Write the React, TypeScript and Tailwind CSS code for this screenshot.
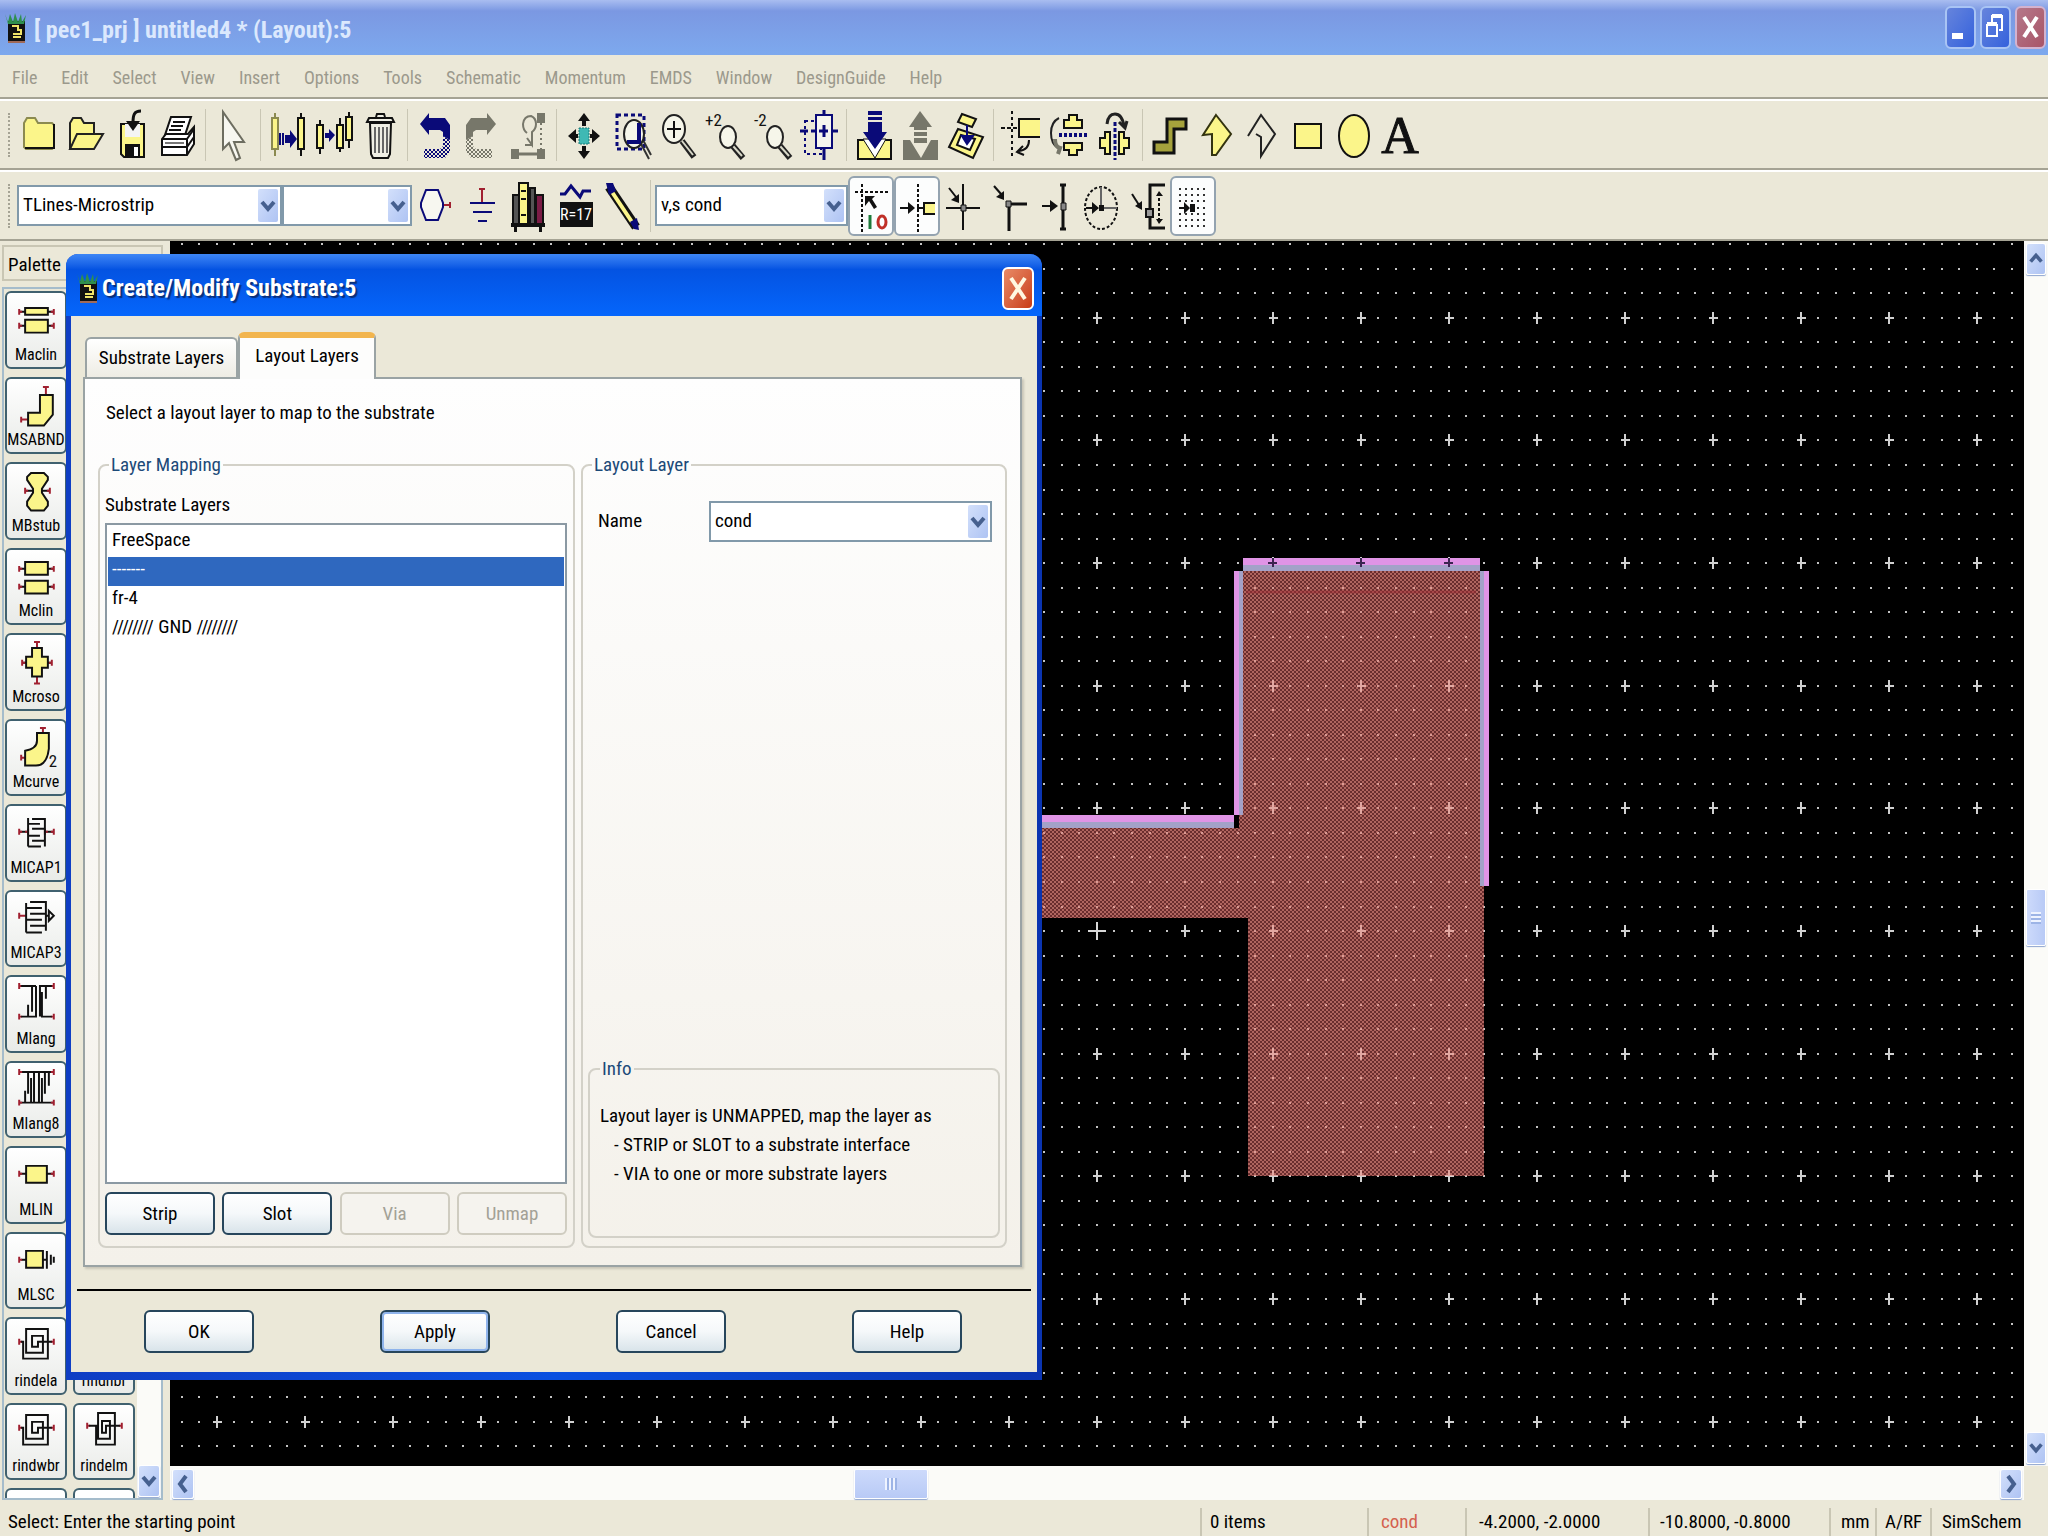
import { useId, type ReactNode } from "react";
import clsx from "clsx";

const Y = "#fbf58a";
const NAVY = "#0a0a78";
const RED = "#a02030";

const MENUS = [
  "File",
  "Edit",
  "Select",
  "View",
  "Insert",
  "Options",
  "Tools",
  "Schematic",
  "Momentum",
  "EMDS",
  "Window",
  "DesignGuide",
  "Help",
];

type Tool = { label: string; art: ReactNode; pressed?: boolean };

const lens = (cx: number, cy: number, rx: number, ry: number, hx: number, hy: number) => (
  <>
    <path d={`M${cx + rx - 3} ${cy + ry - 2}L${hx} ${hy}`} stroke="#222" strokeWidth="6" />
    <path d={`M${cx + rx - 3} ${cy + ry - 2}L${hx - 1} ${hy - 2}`} stroke="#d8d8c8" strokeWidth="2" />
    <ellipse cx={cx} cy={cy} rx={rx} ry={ry} fill="#f6f6ea" stroke="#222" strokeWidth="2" />
  </>
);

function CurvedArrow({ color, flip }: { color: string; flip?: boolean }) {
  const dither = useId();
  return (
    <g transform={flip ? "matrix(-1 0 0 1 43 0)" : undefined}>
      <pattern id={dither} width="4" height="4" patternUnits="userSpaceOnUse">
        <path d="M0 0h2v2H0zM2 2h2v2H2z" fill={color} />
      </pattern>
      <path d="M7 15L16 4v5h16l5 7v15l-7-4v-4l-3-2H16v5z" fill={color} />
      <path d="M30 27l7 4v12l-5 6H11v-9h16l3-3z" fill={`url(#${dither})`} />
    </g>
  );
}

const FILE_TOOLS: Tool[] = [
  {
    label: "New",
    art: (
      <>
        <path d="M6 14l3-5h8l3 5h14l2 2v22l-2 2H8l-2-2z" fill={Y} stroke="#8b8a50" strokeWidth="2" />
        <path d="M36 15v24H7" stroke="#111" strokeWidth="2" />
      </>
    ),
  },
  {
    label: "Open",
    art: (
      <g fill={Y} stroke="#222" strokeWidth="2">
        <path d="M6 40V14l3-5h8l3 5h10v11" />
        <path d="M13 25h26L30 40H6z" />
      </g>
    ),
  },
  {
    label: "Save",
    art: (
      <>
        <path d="M11 15h23v33H14l-3-3z" fill={Y} stroke="#111" strokeWidth="2" />
        <path d="M15 15h15v13H15z" fill="#f4f4f4" />
        <path d="M15 35h15v13H15z" fill="#111" />
        <path d="M24 38h4v9h-4z" fill="#fff" />
        <path d="M31 2c-7 0-8 4-8 12" stroke="#111" strokeWidth="3" />
        <path d="M16 12h14l-7 10z" fill="#111" />
      </>
    ),
  },
  {
    label: "Print",
    art: (
      <g stroke="#111" strokeWidth="2" fill="#fff">
        <path d="M15 8h20l-6 18H9z" />
        <path d="M17 13h12M15 17h12M13 21h12" />
        <path d="M6 30l4-5h22l6-7v17l-7 11H6z" />
        <path d="M6 30h25v16M31 30l7-10M6 38h25l7-10" />
        <path d="M9 34h19" stroke="#777" />
      </g>
    ),
  },
];

const POINTER_TOOLS: Tool[] = [
  {
    label: "End command",
    art: <path d="M12 3v37l6-6 7 17 4-2-6-16h10z" fill="#f7f7f0" stroke="#6d6d60" strokeWidth="2" />,
  },
];

const EDIT_TOOLS: Tool[] = [
  {
    label: "Move component",
    art: (
      <g strokeWidth="2">
        <path d="M9 4v43" stroke="#8b8a50" />
        <path d="M6 9h6v31H6z" fill={Y} stroke="#8b8a50" />
        <path d="M35 4v43" stroke="#111" />
        <path d="M32 9h6v31h-6z" fill={Y} stroke="#111" />
        <path d="M14 24v12M17 24v12" stroke={NAVY} />
        <path d="M19 26h5v-5l7 9-7 9v-5h-5z" fill={NAVY} />
      </g>
    ),
  },
  {
    label: "Copy component",
    art: (
      <g strokeWidth="2" stroke="#111" fill={Y}>
        <path d="M8 11v34M28 9v34M37 3v36" />
        <path d="M5 16h6v23H5zM25 16h6v23h-6zM34 8h6v23h-6z" />
        <path d="M13 24h4v-4l6 6-6 7v-4h-4z" fill={NAVY} stroke="none" />
      </g>
    ),
  },
  {
    label: "Delete",
    art: (
      <g stroke="#111" strokeWidth="2" fill="#efeee4">
        <path d="M12 14h21l-1 31-2 4H15l-2-4z" />
        <path d="M9 13l2-4h23l2 4zM18 8l1-3h7l1 3" />
        <path d="M17 18v26M21 18v26M25 18v26M29 18v26" stroke="#666" />
      </g>
    ),
  },
];

const UNDO_TOOLS: Tool[] = [
  { label: "Undo", art: <CurvedArrow color={NAVY} /> },
  { label: "Redo", art: <CurvedArrow color="#77776a" flip /> },
  {
    label: "Edit corner",
    art: (
      <g stroke="#77776a" strokeWidth="2">
        <path d="M31 5h6v8h-6zM5 41h6v8H5zM31 41h6v8h-6z" fill="#77776a" />
        <path d="M11 45h20" strokeWidth="3" />
        <path d="M34 14v27" strokeDasharray="2 3" />
        <path d="M20 24q-4-3-4-9 1-8 8-8 5 2 5 8 0 5-4 8v12" />
        <path d="M20 29l5 7v-8M18 36h8" />
      </g>
    ),
  },
];

const VIEW_TOOLS: Tool[] = [
  {
    label: "View all",
    art: (
      <>
        <path d="M17 19h10v16H17z" fill="#3fb9b4" stroke="#187a78" strokeDasharray="2 1" />
        <path
          d="M22 4l6 8h-4v5h-4v-5h-4zM22 50l6-8h-4v-5h-4v5h-4zM6 27l8-7v5h2v4h-2v5zM38 27l-8-7v5h-2v4h2v5z"
          fill="#111"
        />
      </>
    ),
  },
  {
    label: "Zoom area",
    art: (
      <>
        <path d="M8 6h27v34H8z" stroke={NAVY} strokeWidth="3" strokeDasharray="4 3" />
        <path d="M31 33l9 17M34 31l8 15" stroke="#333" strokeWidth="2" />
        <ellipse cx="25" cy="25" rx="10" ry="14" fill="#f6f6ea" stroke="#222" strokeWidth="2" />
        <path d="M30 14v19H18" stroke={NAVY} strokeWidth="4" />
      </>
    ),
  },
  {
    label: "Zoom in",
    art: (
      <>
        {lens(18, 20, 11, 14, 38, 48)}
        <path d="M11 20h14M18 12v17" stroke="#111" strokeWidth="2" />
      </>
    ),
  },
  {
    label: "Zoom in x2",
    art: (
      <>
        <text x="2" y="17" fontSize="17" fill="#111">+2</text>
        {lens(25, 28, 8, 11, 40, 49)}
      </>
    ),
  },
  {
    label: "Zoom out x2",
    art: (
      <>
        <text x="4" y="17" fontSize="17" fill="#111">-2</text>
        {lens(25, 28, 8, 11, 40, 49)}
      </>
    ),
  },
  {
    label: "Recentre view",
    art: (
      <g stroke={NAVY} strokeWidth="2">
        <path d="M8 12h16v33H8z" strokeDasharray="3 3" />
        <path d="M19 6h16v33H19z" fill="#f6f6ee" />
        <path d="M27 1v5M27 39v12M3 22h8M14 22h5M35 22h6M22 22h9M27 16v12" strokeWidth="3" />
      </g>
    ),
  },
];

const HIERARCHY_TOOLS: Tool[] = [
  {
    label: "Push into hierarchy",
    art: (
      <>
        <path d="M6 31h33v19H6z" fill={Y} stroke="#111" strokeWidth="2" />
        <path d="M11 30h23L23 49z" fill="#fff" stroke="#111" />
        <path d="M16 2h14v4H16zM16 8h14v3H16zM16 13h14v10h5L23 40 11 23h5z" fill={NAVY} />
      </>
    ),
  },
  {
    label: "Pop out of hierarchy",
    art: (
      <>
        <path d="M5 31h7l11 18 10-18h7v20H5z" fill="#77776a" />
        <path d="M22 2l12 16h-5v3H16v-3h-5zM16 23h13v4H16zM16 29h13v5H16z" fill="#77776a" />
      </>
    ),
  },
  {
    label: "Insert layer",
    art: (
      <g stroke="#111" strokeWidth="2" fill={Y}>
        <path d="M14 20l25 8-10 21-24-11z" />
        <path d="M17 26l14 4-5 11-13-5z" fill="#fff" />
        <path d="M18 5l14 5-4 8-14-5z" />
        <path d="M23 16v12M18 27l5 8 6-8z" stroke={NAVY} fill={NAVY} />
      </g>
    ),
  },
];

const TRANSFORM_TOOLS: Tool[] = [
  {
    label: "Rotate",
    art: (
      <g stroke="#111" strokeWidth="2">
        <path d="M13 2v48" strokeDasharray="3 3" />
        <path d="M2 19h18" strokeDasharray="4 2" />
        <path d="M41 10H20v18h21" fill={Y} />
        <path d="M30 31q0 10-10 11M24 37l-6 6 7 3" />
      </g>
    ),
  },
  {
    label: "Mirror X",
    art: (
      <>
        <path d="M23 6h8v5h5v8H18v-8h5zM23 46h8v-5h5v-7H18v7h5z" fill={Y} stroke="#111" strokeWidth="2" />
        <path d="M13 26h28" stroke={NAVY} strokeWidth="4" strokeDasharray="3 2" />
        <path d="M13 9q-8 4-8 15t7 15" stroke="#222" strokeWidth="2" />
        <path d="M9 30q0 8 5 9l-2 6" stroke="#77776a" strokeWidth="4" />
      </>
    ),
  },
  {
    label: "Mirror Y",
    art: (
      <>
        <path d="M17 23v22h-5v-6H7V29h5v-6zM26 23v22h5v-6h5V29h-5v-6z" fill={Y} stroke="#111" strokeWidth="2" />
        <path d="M22 13v38" stroke={NAVY} strokeWidth="3" strokeDasharray="4 2" />
        <path d="M14 15q1-10 8-10t9 12M26 13l6 6 2-7" stroke="#222" strokeWidth="3" />
      </>
    ),
  },
];

const DRAW_TOOLS: Tool[] = [
  {
    label: "Insert trace",
    art: <path d="M19 10h19v10H26v24H6V33h13z" fill="#a5a23c" stroke="#111" strokeWidth="3" />,
  },
  {
    label: "Insert polygon",
    art: <path d="M22 6l15 19-15 21h-4V25l-9 1z" fill={Y} stroke="#33330f" strokeWidth="2" />,
  },
  {
    label: "Insert polyline",
    art: <path d="M8 27L21 6l14 19-14 22V28l-5-3" stroke="#222" strokeWidth="2" />,
  },
  {
    label: "Insert rectangle",
    art: <path d="M9 15h26v24H9z" fill={Y} stroke="#111" strokeWidth="2" />,
  },
  {
    label: "Insert circle",
    art: <ellipse cx="22" cy="27" rx="15" ry="21" fill={Y} stroke="#111" strokeWidth="2" />,
  },
  {
    label: "Insert text",
    art: (
      <text x="22" y="44" textAnchor="middle" fontSize="52" fontFamily="Liberation Serif, serif" fill="#111" stroke="#111">
        A
      </text>
    ),
  },
];

const COMPONENT_TOOLS: Tool[] = [
  {
    label: "Insert port",
    art: (
      <>
        <path d="M13 10h12l5 13v4l-5 13H13L8 27v-4z" fill="#f7f7f0" stroke={NAVY} strokeWidth="2" />
        <path d="M31 25h6M37 22v6" stroke={RED} strokeWidth="2" />
      </>
    ),
  },
  {
    label: "Insert ground",
    art: (
      <>
        <path d="M22 9v14M19 9h6" stroke={RED} strokeWidth="2" />
        <path d="M10 23h25M13 32h19M18 41h9" stroke={NAVY} strokeWidth="2" />
      </>
    ),
  },
  {
    label: "Library",
    art: (
      <>
        <path d="M6 15h6v29H6zM23 8h5v36h-5z" fill="#555" stroke="#111" strokeWidth="2" />
        <path d="M12 3h9v41h-9z" fill={Y} stroke="#111" strokeWidth="2" />
        <path d="M14 11h5M14 19h5M14 35h5" stroke="#111" strokeWidth="2" />
        <path d="M29 15h7v29h-7z" fill="#7c1c46" stroke="#111" strokeWidth="2" />
        <path d="M4 43h34v4H4zM7 47h3v5H7zM32 47h3v5h-3z" fill="#111" />
      </>
    ),
  },
  {
    label: "Variables",
    art: (
      <>
        <path d="M6 14h5l6-8 9 11 3-6h8" stroke={NAVY} strokeWidth="3" />
        <path d="M6 22h33v25H6z" fill="#111" />
        <text x="22" y="40" textAnchor="middle" fontSize="16" fill="#fff">R=17</text>
      </>
    ),
  },
  {
    label: "Insert wire",
    art: (
      <>
        <path d="M8 7l27 40" stroke="#111" strokeWidth="9" />
        <path d="M11 12l20 30" stroke={Y} strokeWidth="4" />
        <path d="M5 3h7l3 8-7 4zM29 42l7-4 2 12-5-1z" fill={NAVY} />
      </>
    ),
  },
];

const SNAP_TOOLS: Tool[] = [
  {
    label: "Snap enable",
    pressed: true,
    art: (
      <>
        <path d="M13 4v48M6 12h35" stroke="#111" strokeWidth="2" strokeDasharray="3 2" />
        <path d="M16 16h10l-3 3 5 8-3 2-5-8-4 5z" fill="#111" />
        <path d="M21 35v14" stroke="#1d7a3a" strokeWidth="3" />
        <ellipse cx="33" cy="42" rx="4" ry="6" stroke="#c03028" strokeWidth="3" />
      </>
    ),
  },
  {
    label: "Pin snap",
    pressed: true,
    art: (
      <>
        <path d="M23 4v48" stroke="#111" strokeWidth="2" strokeDasharray="3 2" />
        <path d="M40 23H29v11h11" fill={Y} stroke="#111" strokeWidth="2" />
        <path d="M5 28h11M22 28h7" stroke="#111" strokeWidth="2" />
        <path d="M13 22l7 6-7 6z" fill="#111" />
      </>
    ),
  },
  {
    label: "Intersection snap",
    art: (
      <>
        <path d="M22 4v46M5 28h34M8 8l7 9" stroke="#111" strokeWidth="2" />
        <path d="M18 14v9l-8-3z" fill="#111" />
        <path d="M20 25h5v6h-5z" fill="#888" stroke="#111" />
      </>
    ),
  },
  {
    label: "Vertex snap",
    art: (
      <>
        <path d="M40 24H22v27" stroke="#111" strokeWidth="3" />
        <path d="M7 6l7 8" stroke="#111" strokeWidth="2" />
        <path d="M17 11v9l-8-3z" fill="#111" />
        <path d="M19 21h5v6h-5z" fill="#888" stroke="#111" />
      </>
    ),
  },
  {
    label: "Midpoint snap",
    art: (
      <>
        <path d="M30 5v44M27 5h6M27 49h6" stroke="#111" strokeWidth="3" />
        <path d="M9 26h9" stroke="#111" strokeWidth="2" />
        <path d="M17 20l8 6-8 6z" fill="#111" />
        <path d="M28 23h5v7h-5z" fill="#888" stroke="#111" />
      </>
    ),
  },
  {
    label: "Circle centre snap",
    art: (
      <>
        <ellipse cx="22" cy="28" rx="16" ry="21" stroke="#111" strokeWidth="2" strokeDasharray="3 2" />
        <path d="M22 7v21h16" stroke="#666" strokeWidth="2" />
        <path d="M7 28h7" stroke="#111" strokeWidth="2" />
        <path d="M13 22l7 6-7 6zM20 25h5v6h-5z" fill="#111" />
      </>
    ),
  },
  {
    label: "Edge snap",
    art: (
      <>
        <path d="M40 5H25v43h15" stroke="#111" strokeWidth="3" />
        <path d="M7 14l7 11" stroke="#111" strokeWidth="2" />
        <path d="M17 21v9l-7-4z" fill="#111" />
        <path d="M21 29h7v8h-7z" fill="#999" stroke="#111" strokeWidth="2" />
        <path d="M34 13v30" stroke="#111" strokeWidth="2" strokeDasharray="3 2" />
        <path d="M31 16l3-5 4 5zM31 39l3 5 4-5z" fill="#111" />
      </>
    ),
  },
  {
    label: "Grid snap",
    pressed: true,
    art: (
      <>
        <path
          d="M8 9h29M8 15h29M8 21h29M26 28h11M8 34h29M8 40h29M8 46h29"
          stroke="#333"
          strokeWidth="2"
          strokeDasharray="2 4"
        />
        <path d="M8 28h6" stroke="#111" strokeWidth="2" />
        <path d="M13 22l6 6-6 6zM19 24h5v8h-5z" fill="#111" />
      </>
    ),
  },
];

const hTicks = (y: number, x1 = 5, x2 = 40) => (
  <>
    <path d={`M${x1} ${y}H${x2}`} stroke="#111" strokeWidth="2" />
    <path d={`M${x1} ${y - 3}v6M${x2} ${y - 3}v6M${x1} ${y}h3M${x2} ${y}h-3`} stroke={RED} strokeWidth="2" />
  </>
);

// Left and right pins only; the wire between them is part of the symbol.
const pins = (y: number) => (
  <path d={`M5 ${y - 3}v6M5 ${y}h3M40 ${y - 3}v6M40 ${y}h-3`} stroke={RED} strokeWidth="2" />
);

const SPIRAL = (
  <>
    {pins(17)}
    <path d="M7 17h2v17h25V4H12v24h17V11H18v11h6v-5h14" stroke="#111" strokeWidth="2" />
  </>
);

const SPIRAL_TALL = (
  <>
    {pins(15)}
    <path d="M7 15h7v19h19V2H16v26h12V10h-8v12h4v-7h14" stroke="#111" strokeWidth="2" />
  </>
);

// The covered cells of the second column have no entry.
const PALETTE: { left: [string, ReactNode]; right?: [string, ReactNode] }[] = [
  {
    left: [
      "Maclin",
      <>
        {hTicks(13)}
        {hTicks(27)}
        <path d="M11 9h23v7H11zM11 21h23v13H11z" fill={Y} stroke="#111" strokeWidth="2" />
      </>,
    ],
  },
  {
    left: [
      "MSABND",
      <>
        <path d="M32 2v8M7 35h7M29 2h6M7 32v6" stroke={RED} strokeWidth="2" />
        <path d="M26 10h13v20L30 41H14V28h12z" fill={Y} stroke="#111" strokeWidth="2" />
      </>,
    ],
  },
  {
    left: [
      "MBstub",
      <>
        {hTicks(21, 11, 36)}
        <path d="M13 7l4-4h13l4 4v3l-6 9v4l6 9v4l-4 5H17l-4-5v-4l6-9v-4l-6-9z" fill={Y} stroke="#111" strokeWidth="2" />
      </>,
    ],
  },
  {
    left: [
      "Mclin",
      <>
        {hTicks(13)}
        {hTicks(31)}
        <path d="M11 6h23v13H11zM11 25h23v13H11z" fill={Y} stroke="#111" strokeWidth="2" />
      </>,
    ],
  },
  {
    left: [
      "Mcroso",
      <>
        {hTicks(22, 8, 38)}
        <path d="M23 1v42M20 1h6M20 43h6" stroke={RED} strokeWidth="2" />
        <path d="M18 7h10v9h6v11h-6v9H18v-9h-6V16h6z" fill={Y} stroke="#111" strokeWidth="2" />
      </>,
    ],
  },
  {
    left: [
      "Mcurve",
      <>
        <path d="M29 1v5M26 1h6M7 31h4M7 28v6" stroke={RED} strokeWidth="2" />
        <path d="M23 6h12v16q-2 17-13 17H11V24q12-2 12-10z" fill={Y} stroke="#111" strokeWidth="2" />
        <text x="35" y="40" fontSize="17" fill="#111">2</text>
      </>,
    ],
  },
  {
    left: [
      "MICAP1",
      <>
        {hTicks(20, 5, 14)}
        {hTicks(20, 31, 40)}
        <path d="M14 6v29M31 6v29M18 7h13M14 12h12M18 17h13M14 24h12M18 29h13M14 35h13" stroke="#111" strokeWidth="2" />
      </>,
    ],
  },
  {
    left: [
      "MICAP3",
      <>
        <path d="M5 18h7M5 15v6" stroke={RED} strokeWidth="2" />
        <path
          d="M12 5v30M32 3v30M16 4h16M12 10h16M16 16h16M12 22h16M16 28h16M12 35h16M32 18h3v-5l5 5-5 5v-5"
          stroke="#111"
          strokeWidth="2"
        />
      </>,
    ],
  },
  {
    left: [
      "Mlang",
      <>
        {pins(3)}
        {pins(34)}
        <path
          d="M7 3h11v26M22 3v31H7M14 22v12M22 3h-4M26 34V3h12M28 9v25h10M32 3v13"
          stroke="#111"
          strokeWidth="2"
        />
      </>,
    ],
  },
  {
    left: [
      "Mlang8",
      <>
        {hTicks(3)}
        {hTicks(34)}
        <path
          d="M11 22v12M14 3v22M17 9v25M20 3v31M25 3v31M28 9v25M31 3v22M35 3v14"
          stroke="#111"
          strokeWidth="2"
        />
      </>,
    ],
  },
  {
    left: [
      "MLIN",
      <>
        {hTicks(20)}
        <path d="M12 12h21v17H12z" fill={Y} stroke="#111" strokeWidth="2" />
      </>,
    ],
  },
  {
    left: [
      "MLSC",
      <>
        <path d="M7 20h5" stroke="#111" strokeWidth="2" />
        <path d="M5 17v6M5 20h3" stroke={RED} strokeWidth="2" />
        <path d="M12 11h17v17H12z" fill={Y} stroke="#111" strokeWidth="2" />
        <path d="M29 20h4M33 11v18M37 15v10M40 17v6" stroke="#111" strokeWidth="2" />
      </>,
    ],
  },
  { left: ["rindela", SPIRAL], right: ["rindnbr", SPIRAL_TALL] },
  { left: ["rindwbr", SPIRAL], right: ["rindelm", SPIRAL_TALL] },
];

function AppIcon() {
  return (
    <svg viewBox="0 0 24 32" className="h-8 w-6 shrink-0" aria-hidden="true">
      <path d="M4 9h17v20H4z" fill="#111" />
      <path d="M1 2l3 8 2-8 3 8 2-9 3 9 3-8 1 8 4-7-2 9H4z" fill="#2f8f4e" />
      <path d="M8 14h6v4h3v4H9M9 25h8" fill="none" stroke="#f0e46a" strokeWidth="2" />
      <path d="M4 30h17" stroke="#a06a58" strokeWidth="2" />
    </svg>
  );
}

function ToolGroup({ tools, wide, last }: { tools: Tool[]; wide?: boolean; last?: boolean }) {
  return (
    <>
      <div className={clsx("flex shrink-0", wide && "gap-px")}>
        {tools.map((tool) => (
          <button
            key={tool.label}
            type="button"
            aria-label={tool.label}
            aria-pressed={tool.pressed}
            className={clsx(
              "flex h-[60px] w-[46px] items-center justify-center rounded-md border-2",
              tool.pressed ? "border-[#94a3b0] bg-[#fcfdfd]" : "border-transparent",
            )}
          >
            <svg viewBox="0 0 44 52" fill="none" className="h-[52px] w-11 shrink-0 overflow-visible">
              {tool.art}
            </svg>
          </button>
        ))}
      </div>
      {!last && <div className="mx-1 h-[52px] w-px shrink-0 bg-[#c9c6b4]" />}
    </>
  );
}

function Grip() {
  return <div className="ml-2 h-11 w-1 shrink-0 border-l-2 border-dotted border-[#a5a394]" />;
}

const CHEVRONS = {
  up: "M4 15l6-7 6 7",
  down: "M4 8l6 7 6-7",
  left: "M13 4l-6 8 6 8",
  right: "M7 4l6 8-6 8",
};

type Direction = keyof typeof CHEVRONS;

function Chevron({ className, dir = "down" }: { className?: string; dir?: Direction }) {
  return (
    <span
      className={clsx(
        "flex items-center justify-center rounded-xs bg-linear-to-br from-[#d3e0fb] to-[#aec3f3]",
        className,
      )}
    >
      <svg viewBox="0 0 20 24" fill="none" className="h-6 w-5" aria-hidden="true">
        <path d={CHEVRONS[dir]} stroke="#46608f" strokeWidth="4" />
      </svg>
    </span>
  );
}

function ScrollButton({ dir, className }: { dir: Direction; className?: string }) {
  return (
    <button
      type="button"
      aria-label={`Scroll ${dir}`}
      className={clsx("flex shrink-0 rounded-xs border border-white shadow-[0_1px_1px_#8fa6cf]", className)}
    >
      <Chevron dir={dir} className="h-full w-full" />
    </button>
  );
}

function Combo({ value, label, id, className }: { value: string; label?: string; id?: string; className: string }) {
  return (
    <div className={clsx("grid shrink-0 border-2 border-[#8199aa] bg-white", className)}>
      <select
        id={id}
        aria-label={label}
        defaultValue={value}
        className="w-full appearance-none bg-transparent pr-7 pl-1 outline-none [grid-area:1/1]"
      >
        <option value={value}>{value}</option>
      </select>
      <Chevron className="pointer-events-none m-0.5 w-5 self-stretch justify-self-end [grid-area:1/1]" />
    </div>
  );
}

function TitleBar() {
  return (
    <header className="flex h-[55px] shrink-0 items-center bg-linear-to-b from-[#a9bdf0] via-[#7b98e2] via-20% to-[#7da9ee] pl-1">
      <AppIcon />
      <h1 className="ml-1.5 flex-1 pt-1 text-[24px] leading-8 font-bold text-[#dbe8fd]">
        [ pec1_prj ] untitled4 * (Layout):5
      </h1>
      <div className="flex gap-1 pr-0.5">
        <button
          type="button"
          aria-label="Minimize"
          className="h-[43px] w-[31px] rounded-md border-2 border-[#a9c4f4] bg-linear-to-br from-[#6684dc] to-[#3561dc]"
        >
          <svg viewBox="0 0 27 39" className="h-full w-full">
            <path d="M5 25h11v6H5z" fill="#fff" />
          </svg>
        </button>
        <button
          type="button"
          aria-label="Restore"
          className="h-[43px] w-[31px] rounded-md border-2 border-[#a9c4f4] bg-linear-to-br from-[#6684dc] to-[#3561dc]"
        >
          <svg viewBox="0 0 27 39" fill="none" className="h-full w-full">
            <path d="M10 14V8h10v14h-3M5 17h10v11H5z" stroke="#fff" strokeWidth="2" />
            <path d="M10 8h10M5 16h10" stroke="#fff" strokeWidth="4" />
          </svg>
        </button>
        <button
          type="button"
          aria-label="Close"
          className="h-[43px] w-[31px] rounded-md border-2 border-[#d3b3cf] bg-linear-to-br from-[#b5788a] to-[#a85468]"
        >
          <svg viewBox="0 0 27 39" className="h-full w-full">
            <path d="M7 9l13 20M20 9L7 29" stroke="#fff" strokeWidth="4" />
          </svg>
        </button>
      </div>
    </header>
  );
}

function Palette() {
  return (
    <aside className="flex w-[163px] shrink-0 flex-col pl-0.5">
      <h2 className="mt-1 mb-1.5 h-9 border-2 border-[#c9c6b4] pl-1 leading-9">Palette</h2>
      <div className="flex min-h-0 flex-1 border-2 border-[#a5bccb]">
        <div className="grid min-h-0 flex-1 grid-cols-[62px_62px] grid-rows-[repeat(14,1fr)_10px] gap-x-1.5 gap-y-2 overflow-hidden pt-0.5 pl-px">
          {PALETTE.flatMap(({ left, right }, row) =>
            [left, right].map((cell, col) =>
              cell ? (
                <button
                  key={`${row}-${col}`}
                  type="button"
                  className="flex min-h-0 flex-col items-center justify-between rounded-md border-2 border-[#40616f] bg-linear-to-b from-white to-[#e9ebe8] pt-1.5 text-[16px] leading-6"
                >
                  <svg viewBox="0 0 44 44" fill="none" className="h-11 w-11" aria-hidden="true">
                    {cell[1]}
                  </svg>
                  {cell[0]}
                </button>
              ) : (
                <span key={`${row}-${col}`} />
              ),
            ),
          )}
          <div className="rounded-t-md border-2 border-b-0 border-[#40616f] bg-white" />
          <div className="rounded-t-md border-2 border-b-0 border-[#40616f] bg-white" />
        </div>
        <div className="flex w-6 flex-col justify-end bg-[#fbfbf8] p-px">
          <ScrollButton dir="down" className="h-8 w-[22px]" />
        </div>
      </div>
    </aside>
  );
}

// Grid spacing of the drawing area: a dot every 0.2 mm, a cross on each 1 mm.
const STEP_X = 17.6;
const STEP_Y = 24.53;
const ORIGIN_X = 46.7;
const ORIGIN_Y = 76.8;

function gridPaths() {
  let dots = "";
  let crosses = "";
  for (let i = -2; i < 103; i++) {
    for (let j = -3; j < 47; j++) {
      const x = Math.round(ORIGIN_X + i * STEP_X);
      const y = Math.round(ORIGIN_Y + j * STEP_Y);
      if (i % 5 === 0 && j % 5 === 0) crosses += `M${x - 4} ${y}h9M${x} ${y - 6}v12`;
      else dots += `M${x - 1} ${y}h2`;
    }
  }
  return { dots, crosses };
}

const METAL = "M872 587h197V574h4V330h237v315h4v290h-236V677H872z";

function Canvas() {
  const hatch = useId();
  const metal = useId();
  const { dots, crosses } = gridPaths();
  return (
    <div className="relative min-w-0 flex-1 overflow-hidden bg-black">
      <svg className="absolute inset-0 h-full w-full" role="img" aria-label="Layout drawing">
        <defs>
          <pattern id={hatch} width="4" height="4" patternUnits="userSpaceOnUse">
            <path d="M0 0h4v4H0z" fill="#6a2d2e" />
            <path d="M0 0h2v2H0zM2 2h2v2H2z" fill="#b0655f" />
          </pattern>
          <clipPath id={metal}>
            <path d={METAL} />
          </clipPath>
        </defs>
        <path d={dots} stroke="#c4c4c4" strokeWidth="2" />
        <path d={crosses} stroke="#d0d0d0" strokeWidth="2" />
        <path d="M918 690h18M927 681v18" stroke="#d8d8d8" strokeWidth="2" />
        <path d={METAL} fill={`url(#${hatch})`} />
        <path d="M1076 351h230" stroke="#a02c34" strokeWidth="3" opacity=".5" />
        <g clipPath={`url(#${metal})`}>
          <path d={dots} stroke="#d99a94" strokeWidth="2" />
          <path d={crosses} stroke="#e2a8a2" strokeWidth="2" />
        </g>
        <g fill="#e094e6">
          <path d="M1073 317h237v7h-237zM1064 330h5v244h-5zM1314 330h5v315h-5zM872 574h192v7H872z" />
        </g>
        <g fill="#a3a2c8">
          <path d="M1073 324h237v6h-237zM1069 330h4v244h-4zM1310 330h4v315h-4zM872 581h192v6H872z" />
        </g>
        <path
          d="M1098 322h9M1103 317v9M1186 322h9M1191 317v9M1274 322h9M1279 317v9"
          stroke="#3b2450"
          strokeWidth="2"
        />
      </svg>
    </div>
  );
}

const DIALOG_BUTTON =
  "h-[43px] w-[110px] rounded-md border-2 border-[#27465c] bg-linear-to-b from-white via-[#f5f8fa] to-[#d9e4ea] pt-0.5 disabled:border-[#cfccc0] disabled:bg-none disabled:bg-[#f5f3ee] disabled:text-[#a3a196]";

function SubstrateDialog() {
  return (
    <section
      role="dialog"
      aria-labelledby="substrate-title"
      className="absolute top-[254px] left-[66px] w-[976px] rounded-t-xl bg-linear-to-r from-[#0f3ec4] via-[#0a50e0] to-[#0a34b0] px-[5px] pb-2"
    >
      <div className="-mx-[5px] flex h-[62px] items-center rounded-t-xl bg-linear-to-b from-[#3d86f5] via-[#0453e2] via-25% to-[#0566fc] pt-1.5 pr-2 pl-2.5">
        <AppIcon />
        <h2
          id="substrate-title"
          className="ml-0.5 flex-1 text-[24px] leading-8 font-bold text-white [text-shadow:2px_2px_1px_#0a2f7a]"
        >
          Create/Modify Substrate:5
        </h2>
        <button
          type="button"
          aria-label="Close dialog"
          className="h-[43px] w-8 rounded-md border-2 border-white bg-linear-to-br from-[#e88a66] to-[#c83a12]"
        >
          <svg viewBox="0 0 28 39" className="h-full w-full">
            <path d="M7 9l14 21M21 9L7 30" stroke="#fff8e0" strokeWidth="4" />
          </svg>
        </button>
      </div>

      <div className="bg-[#ebe8d8] px-1.5 pt-4 pb-[19px]">
        <div className="mr-[9px] ml-1.5">
          <div role="tablist" className="flex items-end pl-0.5">
            <button
              type="button"
              role="tab"
              aria-selected="false"
              className="h-10 w-[153px] rounded-t-md border-2 border-b-0 border-[#9aa3a4] bg-linear-to-b from-white to-[#eeece4]"
            >
              Substrate Layers
            </button>
            <button
              type="button"
              role="tab"
              aria-selected="true"
              className="-mb-0.5 h-[47px] w-[138px] rounded-t-md border-2 border-t-[6px] border-b-0 border-[#9aa3a4] border-t-[#f2b54e] bg-[#fdfdfc] pb-1"
            >
              Layout Layers
            </button>
          </div>
          <div
            role="tabpanel"
            className="border-2 border-[#9aa3a4] bg-linear-to-b from-[#fefefe] to-[#f4f1ea] px-[13px] pt-[18px] pb-[17px] shadow-[2px_2px_2px_#c9c6b8]"
          >
            <p className="pl-2 leading-8">Select a layout layer to map to the substrate</p>
            <div className="mt-5 flex gap-1.5">
              <fieldset className="h-[799px] w-[477px] rounded-lg border-2 border-[#d3d1c8] pr-1.5 pl-[5px]">
                <legend className="ml-1 px-0.5 leading-8 text-[#1c4a78]">Layer Mapping</legend>
                <label htmlFor="substrate-layers" className="block pt-1.5 leading-9">
                  Substrate Layers
                </label>
                <select
                  id="substrate-layers"
                  size={8}
                  defaultValue="interface"
                  className="block h-[661px] w-full overflow-hidden border-2 border-[#8b99a3] bg-white p-px pt-[3px] outline-none"
                >
                  <option className="h-[29px] px-1 py-0 leading-[31px]" value="freespace">FreeSpace</option>
                  <option
                    className="h-[29px] bg-[#2f68bf] bg-linear-to-b from-[#2f68bf] to-[#2f68bf] px-1 py-0 leading-[29px] text-white checked:text-white"
                    value="interface"
                  >
                    -------
                  </option>
                  <option className="h-[29px] px-1 py-0 leading-[29px]" value="fr4">fr-4</option>
                  <option className="h-[29px] px-1 py-0 leading-[29px]" value="gnd">//////// GND ////////</option>
                </select>
                <div className="mt-2 flex justify-between">
                  <button type="button" className={DIALOG_BUTTON}>Strip</button>
                  <button type="button" className={DIALOG_BUTTON}>Slot</button>
                  <button type="button" disabled className={DIALOG_BUTTON}>Via</button>
                  <button type="button" disabled className={DIALOG_BUTTON}>Unmap</button>
                </div>
              </fieldset>

              <fieldset className="flex h-[799px] flex-1 flex-col justify-between rounded-lg border-2 border-[#d3d1c8] px-[5px] pb-2">
                <legend className="ml-1 px-0.5 leading-8 text-[#1c4a78]">Layout Layer</legend>
                <div className="mt-5 flex items-center pr-2 pl-2.5">
                  <label htmlFor="layer-name" className="flex-1">Name</label>
                  <Combo id="layer-name" value="cond" className="h-[41px] w-[283px]" />
                </div>
                <fieldset className="h-[185px] rounded-lg border-2 border-[#d3d1c8] pl-2.5">
                  <legend className="px-0.5 leading-8 text-[#1c4a78]">Info</legend>
                  <p className="mt-4 leading-[29px]">Layout layer is UNMAPPED, map the layer as</p>
                  <p className="pl-3.5 leading-[29px]">- STRIP or SLOT to a substrate interface</p>
                  <p className="pl-3.5 leading-[29px]">- VIA to one or more substrate layers</p>
                </fieldset>
              </fieldset>
            </div>
          </div>
        </div>
        <hr className="mt-[22px] mb-[19px] border-t-2 border-black" />
        <div className="flex justify-between pr-[69px] pl-[67px]">
          <button type="button" className={DIALOG_BUTTON}>OK</button>
          <button type="button" className={clsx(DIALOG_BUTTON, "shadow-[inset_0_0_0_2px_#8fb4ec]")}>Apply</button>
          <button type="button" className={DIALOG_BUTTON}>Cancel</button>
          <button type="button" className={DIALOG_BUTTON}>Help</button>
        </div>
      </div>
    </section>
  );
}

export default function App() {
  return (
    <div className="relative flex h-screen min-h-[1400px] flex-col overflow-hidden bg-[#ebe8d8] font-['Roboto_Condensed','DejaVu_Sans_Condensed',sans-serif] text-[19px] text-black">
      <TitleBar />

      <nav className="flex h-11 shrink-0 items-center gap-6 border-b-2 border-[#a5a394] pt-0.5 pl-3 text-[18px] text-[#9b998c]">
        {MENUS.map((menu) => (
          <button key={menu} type="button">
            {menu}
          </button>
        ))}
      </nav>

      <div className="flex h-[71px] shrink-0 items-center border-t-2 border-b-2 border-t-white border-b-[#a5a394]">
        <Grip />
        <div className="w-[5px] shrink-0" />
        <ToolGroup tools={FILE_TOOLS} />
        <ToolGroup tools={POINTER_TOOLS} />
        <ToolGroup tools={EDIT_TOOLS} />
        <ToolGroup tools={UNDO_TOOLS} wide />
        <ToolGroup tools={VIEW_TOOLS} wide />
        <ToolGroup tools={HIERARCHY_TOOLS} />
        <ToolGroup tools={TRANSFORM_TOOLS} wide />
        <ToolGroup tools={DRAW_TOOLS} last />
      </div>

      <div className="flex h-[71px] shrink-0 items-center border-t-2 border-b-2 border-t-white border-b-[#a5a394]">
        <Grip />
        <div className="w-[5px] shrink-0" />
        <Combo label="Palette library" value="TLines-Microstrip" className="h-[41px] w-[265px]" />
        <Combo label="Component history" value="" className="h-[41px] w-[130px]" />
        <ToolGroup tools={COMPONENT_TOOLS} wide />
        <Combo label="Entry layer" value="v,s cond" className="h-[41px] w-[193px]" />
        <ToolGroup tools={SNAP_TOOLS} last />
      </div>

      <main className="flex min-h-0 flex-1">
        <Palette />
        <div className="ml-[7px] flex min-w-0 flex-1 flex-col">
          <div className="flex min-h-0 flex-1">
            <Canvas />
            <div className="flex w-6 shrink-0 flex-col bg-[#fbfbf8] px-0.5 py-0.5">
              <ScrollButton dir="up" className="h-8 w-5" />
              <div className="flex flex-1 flex-col items-center pt-[614px]">
                <div className="flex h-[57px] w-full items-center justify-center rounded-xs border border-white bg-linear-to-r from-[#cddafb] to-[#b8caf6] shadow-[0_1px_1px_#8fa6cf]">
                  <div className="h-3 w-2.5 bg-[repeating-linear-gradient(#eef3ff_0_2px,#9db4e6_2px_4px)]" />
                </div>
              </div>
              <ScrollButton dir="down" className="h-8 w-5" />
            </div>
          </div>
          <div className="mr-6 flex h-[34px] shrink-0 items-center bg-[#fbfbf8] px-0.5 pt-0.5">
            <ScrollButton dir="left" className="h-[30px] w-[22px]" />
            <div className="flex flex-1 pl-[660px]">
              <div className="flex h-[30px] w-[74px] items-center justify-center rounded-xs border border-white bg-linear-to-b from-[#cddafb] to-[#b8caf6] shadow-[0_1px_1px_#8fa6cf]">
                <div className="h-3 w-3 bg-[repeating-linear-gradient(90deg,#eef3ff_0_2px,#9db4e6_2px_4px)]" />
              </div>
            </div>
            <ScrollButton dir="right" className="h-[30px] w-[22px]" />
          </div>
        </div>
      </main>

      <footer className="flex h-9 shrink-0 items-end pl-2">
        <span className="flex-1">Select: Enter the starting point</span>
        <span className="w-[167px] border-l-2 border-[#c9c6b4] pl-2">0 items</span>
        <span className="w-[98px] border-l-2 border-[#c9c6b4] pl-3 text-[#d4604e]">cond</span>
        <span className="w-[183px] border-l-2 border-[#c9c6b4] pl-3">-4.2000, -2.0000</span>
        <span className="w-[181px] border-l-2 border-[#c9c6b4] pl-2.5">-10.8000, -0.8000</span>
        <span className="w-[46px] border-l-2 border-[#c9c6b4] pl-2.5">mm</span>
        <span className="w-[55px] border-l-2 border-[#c9c6b4] pl-2">A/RF</span>
        <span className="w-[118px] border-l-2 border-[#c9c6b4] pl-2.5">SimSchem</span>
      </footer>

      <SubstrateDialog />
    </div>
  );
}
